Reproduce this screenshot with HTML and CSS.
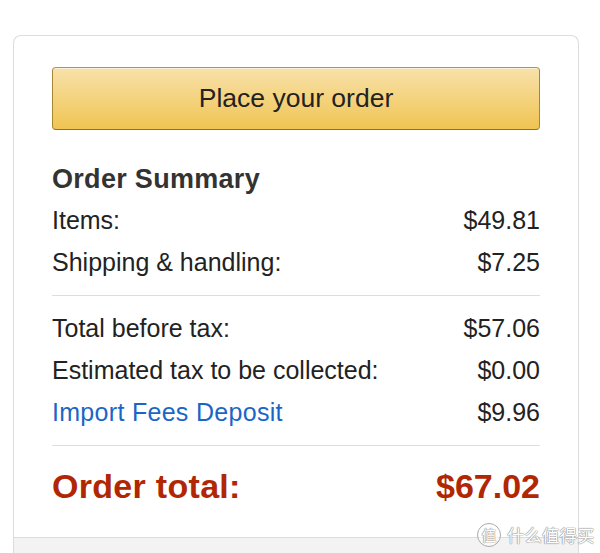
FILE: index.html
```html
<!DOCTYPE html>
<html>
<head>
<meta charset="utf-8">
<link rel="stylesheet" href="styles.css">
</head>
<body>
<div class="box">
  <div class="main">
    <button class="place">Place your order</button>
    <h3 class="title">Order Summary</h3>
    <div class="row"><span>Items:</span><span>$49.81</span></div>
    <div class="row"><span>Shipping &amp; handling:</span><span>$7.25</span></div>
    <hr class="divider">
    <div class="row"><span>Total before tax:</span><span>$57.06</span></div>
    <div class="row"><span>Estimated tax to be collected:</span><span>$0.00</span></div>
    <div class="row"><a class="link" href="#">Import Fees Deposit</a><span>$9.96</span></div>
    <hr class="divider">
    <div class="row total"><span class="total-label">Order total:</span><span>$67.02</span></div>
  </div>
  <div class="foot"></div>
</div>
<div class="watermark"><span class="seal">值</span><span class="wm-text">什么值得买</span></div>
</body>
</html>
```
FILE: styles.css
```css
html, body {
  margin: 0;
  padding: 0;
  background: #fff;
  height: 553px;
  overflow: hidden;
}
body {
  font-family: "Liberation Sans", Arial, sans-serif;
  color: #222;
  position: relative;
}
.box {
  margin: 35px 0 0 13px;
  width: 566px;
  box-sizing: border-box;
  border: 1px solid #dcdcdc;
  border-bottom: none;
  border-radius: 8px 8px 0 0;
}
.main {
  padding: 31px 38px 25px 38px;
}
.place {
  display: block;
  width: 100%;
  height: 63px;
  box-sizing: border-box;
  border: 1px solid;
  border-color: #b8953a #a88734 #8c7030;
  border-radius: 4px;
  background: linear-gradient(to bottom, #f8e2ab, #f0c452);
  box-shadow: inset 0 1px 0 rgba(255,255,255,0.5);
  font-family: "Liberation Sans", Arial, sans-serif;
  font-size: 26.5px;
  color: #222;
  padding: 0;
  margin: 0;
}
.title {
  margin: 29px 0 0 0;
  font-size: 27px;
  line-height: 40px;
  font-weight: bold;
  color: #333;
  letter-spacing: 0.3px;
}
.row {
  display: flex;
  justify-content: space-between;
  font-size: 25px;
  line-height: 42px;
}
.link {
  color: #1a66c7;
  text-decoration: none;
  letter-spacing: 0.3px;
}
.divider {
  border: none;
  border-top: 1px solid #ddd;
  margin: 12px 0 11px 0;
  height: 0;
}
.row.total {
  font-size: 34px;
  font-weight: bold;
  color: #b12704;
  line-height: 52px;
  padding-top: 3px;
}
.total-label {
  letter-spacing: 0.3px;
}
.foot {
  border-top: 1px solid #dcdcdc;
  background: #f3f3f3;
  height: 40px;
}
.watermark {
  position: absolute;
  left: 477px;
  top: 523px;
  display: flex;
  align-items: center;
  gap: 6px;
  font-family: "Noto Sans CJK SC", sans-serif;
  color: #fff;
  text-shadow: 0 0 1px #888, 0 0 1px #888, 0 0 1px #999;
}
.seal {
  width: 22px;
  height: 22px;
  border: 1.5px solid #aaa;
  border-radius: 50%;
  font-size: 15px;
  line-height: 22px;
  text-align: center;
  background: rgba(255,255,255,0.6);
}
.wm-text {
  font-size: 17.5px;
  line-height: 24px;
}
```
